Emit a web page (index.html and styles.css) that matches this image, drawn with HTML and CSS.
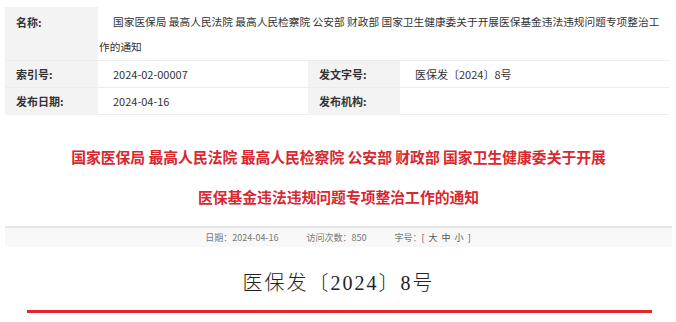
FILE: index.html
```html
<!DOCTYPE html>
<html lang="zh-CN">
<head>
<meta charset="utf-8">
<title>医保发〔2024〕8号</title>
<link rel="stylesheet" href="styles.css">
</head>
<body>
<div class="page">
  <div class="info">
    <div class="lab lab-top">名称:</div>
    <div class="val val-wide"><span class="indent"></span>国家医保局 最高人民法院 最高人民检察院 公安部 财政部 国家卫生健康委关于开展医保基金违法违规问题专项整治工作的通知</div>
    <div class="lab">索引号:</div>
    <div class="val">2024-02-00007</div>
    <div class="lab">发文字号:</div>
    <div class="val">医保发〔2024〕8号</div>
    <div class="lab lab-last">发布日期:</div>
    <div class="val val-last">2024-04-16</div>
    <div class="lab lab-last">发布机构:</div>
    <div class="val val-last"></div>
  </div>

  <h1 class="title">国家医保局 最高人民法院 最高人民检察院 公安部 财政部 国家卫生健康委关于开展<br>医保基金违法违规问题专项整治工作的通知</h1>

  <div class="meta">
    <span class="meta-item">日期：2024-04-16</span>
    <span class="meta-item">访问次数：850</span>
    <span class="meta-item">字号：<span class="sizes">[ 大 中 小 ]</span></span>
  </div>

  <div class="docno">医保发〔2024〕8号</div>
  <div class="redline"></div>
</div>
</body>
</html>
```

FILE: styles.css
```css
html, body {
  margin: 0;
  padding: 0;
  background: #ffffff;
}

.page {
  padding: 7px 4px 0 5px;
  font-family: "Noto Sans CJK SC", "Open Sans", sans-serif;
  color: #333333;
}

.info {
  display: grid;
  grid-template-columns: 93px 210px 92px 269px;
  width: 664px;
  box-sizing: border-box;
  border-right: 1px solid #eeeeee;
  font-size: 11px;
}

.lab {
  background: #f3f3f3;
  font-weight: bold;
  color: #333333;
  padding-left: 11px;
  height: 27px;
  line-height: 26px;
  border-bottom: 1px solid #ececec;
  box-sizing: border-box;
}

.lab-top {
  height: 54px;
  line-height: 30px;
}

.lab-last,
.val-last {
  border-bottom: none;
}

.val {
  background: #ffffff;
  padding-left: 15px;
  height: 27px;
  line-height: 26px;
  border-bottom: 1px solid #ececec;
  box-sizing: border-box;
  white-space: nowrap;
  color: #333333;
}

.val-wide {
  grid-column: 2 / 5;
  height: 54px;
  padding: 2px 0 0 1px;
  font-size: 10.7px;
  line-height: 25px;
  white-space: normal;
}

.indent {
  display: inline-block;
  width: 14px;
}

.title {
  margin: 22px 0 0 0;
  text-align: center;
  font-size: 14.8px;
  line-height: 40px;
  font-weight: bold;
  color: #d8272f;
}

.meta {
  margin: 9px 0 0 0;
  width: 667px;
  height: 21px;
  box-sizing: border-box;
  border-top: 2px solid #e6e6e6;
  background: #f8f8f8;
  display: flex;
  justify-content: center;
  align-items: center;
  gap: 28px;
  font-size: 9px;
  color: #777777;
}

.sizes {
  color: #555555;
  letter-spacing: 1px;
}

.docno {
  margin-top: 23px;
  text-align: center;
  font-family: "Liberation Serif", "Noto Sans CJK SC", serif;
  font-size: 20px;
  line-height: 26px;
  letter-spacing: 2px;
  font-weight: 300;
  color: #222222;
}

.redline {
  margin: 14px 0 0 22px;
  width: 625px;
  height: 3px;
  background: #e2262c;
}
```
